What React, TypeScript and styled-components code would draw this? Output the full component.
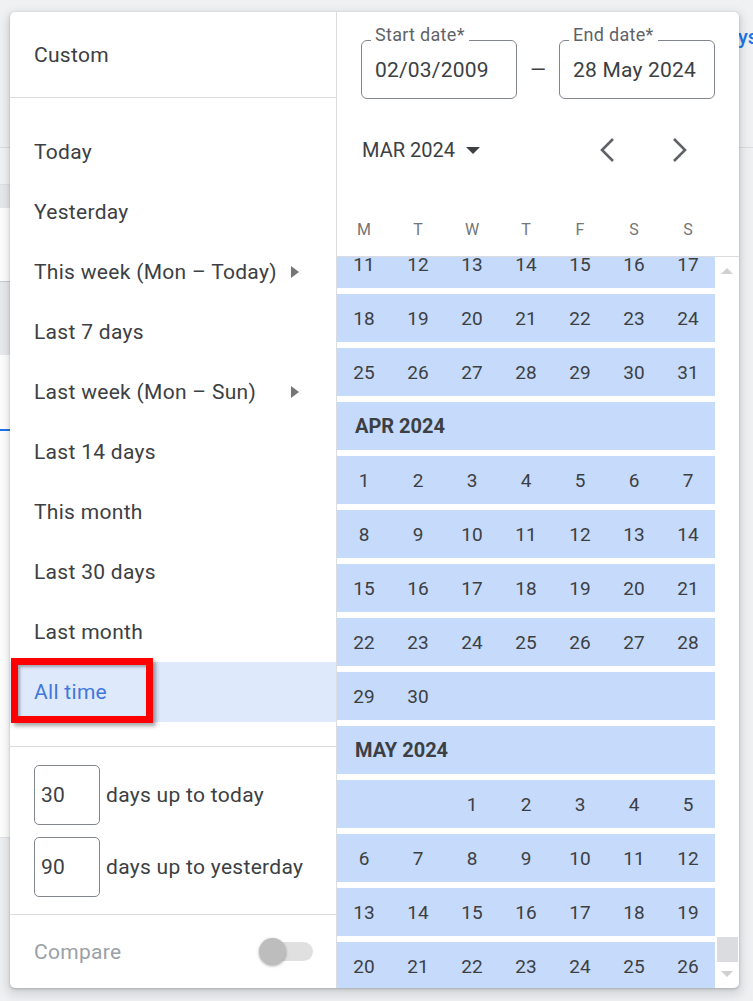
import { useLayoutEffect, useRef } from "react";
import styled, { createGlobalStyle } from "styled-components";

const GlobalStyle = createGlobalStyle`
  html, body {
    margin: 0;
    padding: 0;
  }
  body {
    font-family: Roboto, "Noto Sans", Arial, sans-serif;
    background: #eef0f2;
    overflow: hidden;
  }
  * {
    box-sizing: border-box;
  }
`;

const presets = [
  { label: "Today" },
  { label: "Yesterday" },
  { label: "This week (Mon – Today)", more: true },
  { label: "Last 7 days" },
  { label: "Last week (Mon – Sun)", more: true },
  { label: "Last 14 days" },
  { label: "This month" },
  { label: "Last 30 days" },
  { label: "Last month" },
  { label: "All time", selected: true },
];

const weekdays = ["M", "T", "W", "T", "F", "S", "S"];
const monthNames = ["JAN", "FEB", "MAR", "APR", "MAY", "JUN", "JUL", "AUG", "SEP", "OCT", "NOV", "DEC"];

const buildMonth = (year: number, month: number) => {
  const offset = (new Date(year, month, 1).getDay() + 6) % 7;
  const total = new Date(year, month + 1, 0).getDate();
  const cells: (number | null)[] = Array(offset).fill(null);
  for (let d = 1; d <= total; d++) cells.push(d);
  while (cells.length % 7) cells.push(null);
  const weeks: (number | null)[][] = [];
  for (let i = 0; i < cells.length; i += 7) weeks.push(cells.slice(i, i + 7));
  return { title: `${monthNames[month]} ${year}`, weeks };
};

const months = [buildMonth(2024, 2), buildMonth(2024, 3), buildMonth(2024, 4)];

const App = () => {
  const scrollRef = useRef<HTMLDivElement>(null);

  useLayoutEffect(() => {
    // keep the 11th of March at the top, like the picker does on open
    if (scrollRef.current) scrollRef.current.scrollTop = 179;
  }, []);

  return (
    <>
      <GlobalStyle />
      <Page>
        <TopBar>
          <RangeLink>Last 90 days</RangeLink>
        </TopBar>
        <SideCard>
          <Band $height={37} $tone="#f2f3f5" $edge="#dfe1e4" />
          <Band $height={23} $tone="#e7e9ec" $edge="#e7e9ec" />
          <Band $height={74} $tone="#ffffff" $edge="#c9cbcf" />
          <Band $height={73} $tone="#e8eaed" $edge="#e8eaed" />
          <Band $height={483} $tone="#ffffff" $edge="#dfe1e4">
            <TabLine />
          </Band>
        </SideCard>

        <Popover>
          <PresetColumn>
            <CustomRow>Custom</CustomRow>
            <PresetList>
              {presets.map((p) => (
                <PresetRow key={p.label} $selected={!!p.selected}>
                  {p.label}
                  {p.more && <SubArrow />}
                  {p.selected && <Highlight />}
                </PresetRow>
              ))}
            </PresetList>
            <RollingSection>
              <RollingRow>
                <DaysBox>30</DaysBox>
                days up to today
              </RollingRow>
              <RollingRow>
                <DaysBox>90</DaysBox>
                days up to yesterday
              </RollingRow>
            </RollingSection>
            <CompareRow>
              Compare
              <SwitchTrack>
                <SwitchThumb />
              </SwitchTrack>
            </CompareRow>
          </PresetColumn>

          <CalendarColumn>
            <CalendarHeader>
              <FieldsRow>
                <DateField>
                  <FieldLabel>Start date*</FieldLabel>
                  02/03/2009
                </DateField>
                <Dash>—</Dash>
                <DateField>
                  <FieldLabel>End date*</FieldLabel>
                  28 May 2024
                </DateField>
              </FieldsRow>
              <MonthNav>
                <MonthButton>
                  MAR 2024
                  <Caret />
                </MonthButton>
                <NavButtons>
                  <NavButton aria-label="Previous month">
                    <svg width="16" height="26" viewBox="0 0 16 26">
                      <polyline points="14,2 3,13 14,24" fill="none" stroke="#5f6368" strokeWidth="2.6" />
                    </svg>
                  </NavButton>
                  <NavButton aria-label="Next month">
                    <svg width="16" height="26" viewBox="0 0 16 26">
                      <polyline points="2,2 13,13 2,24" fill="none" stroke="#5f6368" strokeWidth="2.6" />
                    </svg>
                  </NavButton>
                </NavButtons>
              </MonthNav>
              <WeekdayRow>
                {weekdays.map((d, i) => (
                  <Weekday key={i}>{d}</Weekday>
                ))}
              </WeekdayRow>
            </CalendarHeader>

            <CalendarBody>
              <MonthScroller ref={scrollRef}>
                {months.map((m) => (
                  <div key={m.title}>
                    <MonthTitle>{m.title}</MonthTitle>
                    {m.weeks.map((w, i) => (
                      <WeekRow key={i}>
                        {w.map((d, j) => (
                          <DayCell key={j}>{d ?? ""}</DayCell>
                        ))}
                      </WeekRow>
                    ))}
                  </div>
                ))}
              </MonthScroller>
              <ScrollRail>
                <RailArrow $up />
                <RailTrack />
                <RailThumb />
                <RailArrow />
              </ScrollRail>
            </CalendarBody>
          </CalendarColumn>
        </Popover>
      </Page>
    </>
  );
};

export default App;

const Page = styled.div`
  position: relative;
  width: 753px;
  height: 1001px;
  overflow: hidden;
  background: #eef0f2;
`;

const TopBar = styled.div`
  height: 148px;
  display: flex;
  justify-content: flex-end;
  align-items: flex-start;
  padding-top: 25px;
  border-bottom: 1px solid #dadce0;
  background: #eff1f3;
`;

const RangeLink = styled.span`
  flex-shrink: 0;
  margin-right: -5px;
  font-size: 20px;
  font-weight: 500;
  color: #1a73e8;
  white-space: nowrap;
`;

const SideCard = styled.div`
  width: 320px;
  display: flex;
  flex-direction: column;
`;

const Band = styled.div<{ $height: number; $tone: string; $edge: string }>`
  height: ${(p) => p.$height}px;
  background: ${(p) => p.$tone};
  border-bottom: 1px solid ${(p) => p.$edge};
`;

const TabLine = styled.div`
  margin-top: 74px;
  width: 80px;
  height: 2px;
  background: #1a73e8;
`;

const Popover = styled.div`
  position: absolute;
  top: 12px;
  left: 10px;
  width: 729px;
  height: 976px;
  display: flex;
  background: #fff;
  border-radius: 5px;
  overflow: hidden;
  box-shadow: 0 1px 3px rgba(60, 64, 67, 0.3), 0 4px 10px 3px rgba(60, 64, 67, 0.15);
`;

const PresetColumn = styled.div`
  width: 327px;
  display: flex;
  flex-direction: column;
  border-right: 1px solid #dadce0;
  font-size: 21px;
  letter-spacing: 0.3px;
  color: #3c4043;
`;

const CustomRow = styled.div`
  height: 86px;
  display: flex;
  align-items: center;
  padding-left: 24px;
  border-bottom: 1px solid #dadce0;
`;

const PresetList = styled.div`
  padding: 24px 0;
  border-bottom: 1px solid #dadce0;
`;

const PresetRow = styled.div<{ $selected: boolean }>`
  position: relative;
  height: 60px;
  display: flex;
  align-items: center;
  justify-content: space-between;
  padding: 0 37px 0 24px;
  background: ${(p) => (p.$selected ? "#dfe9fc" : "transparent")};
  color: ${(p) => (p.$selected ? "#3f78dd" : "#3c4043")};
`;

const SubArrow = styled.span`
  width: 0;
  height: 0;
  border-left: 8px solid #757575;
  border-top: 6px solid transparent;
  border-bottom: 6px solid transparent;
`;

const Highlight = styled.span`
  position: absolute;
  left: 1px;
  top: -4px;
  width: 142px;
  height: 65px;
  border: 7px solid #ff0000;
  box-shadow: 3px 3px 4px rgba(0, 0, 0, 0.35), inset 2px 2px 3px rgba(0, 0, 0, 0.3);
`;

const RollingSection = styled.div`
  display: flex;
  flex-direction: column;
  gap: 12px;
  padding: 18px 0 17px 24px;
  border-bottom: 1px solid #dadce0;
`;

const RollingRow = styled.div`
  display: flex;
  align-items: center;
  gap: 6px;
`;

const DaysBox = styled.div`
  width: 66px;
  height: 60px;
  display: flex;
  align-items: center;
  padding-left: 6px;
  border: 1px solid #80868b;
  border-radius: 5px;
`;

const CompareRow = styled.div`
  flex: 1;
  display: flex;
  align-items: center;
  justify-content: space-between;
  padding: 0 23px 0 24px;
  color: #9aa0a6;
`;

const SwitchTrack = styled.div`
  position: relative;
  width: 45px;
  height: 19px;
  border-radius: 10px;
  background: #e0e0e0;
`;

const SwitchThumb = styled.div`
  position: absolute;
  left: -9px;
  top: -4px;
  width: 27px;
  height: 27px;
  border-radius: 50%;
  background: #bdbdbd;
  box-shadow: 0 1px 3px rgba(0, 0, 0, 0.35);
`;

const CalendarColumn = styled.div`
  flex: 1;
  display: flex;
  flex-direction: column;
  min-width: 0;
`;

const CalendarHeader = styled.div`
  display: flex;
  flex-direction: column;
  padding-bottom: 10px;
  border-bottom: 1px solid #dadce0;
`;

const FieldsRow = styled.div`
  display: flex;
  align-items: center;
  margin-top: 28px;
  padding-left: 24px;
`;

const DateField = styled.div`
  position: relative;
  width: 156px;
  height: 59px;
  display: flex;
  align-items: center;
  padding-left: 13px;
  border: 1px solid #80868b;
  border-radius: 6px;
  font-size: 21px;
  letter-spacing: 0.2px;
  color: #3c4043;
`;

const FieldLabel = styled.span`
  position: absolute;
  top: -16px;
  left: 9px;
  padding: 0 4px;
  background: #fff;
  font-size: 18px;
  line-height: 20px;
  letter-spacing: 0.3px;
  color: #5f6368;
`;

const Dash = styled.span`
  width: 42px;
  text-align: center;
  font-size: 20px;
  color: #3c4043;
`;

const MonthNav = styled.div`
  height: 40px;
  margin-top: 31px;
  display: flex;
  align-items: center;
  justify-content: space-between;
  padding: 0 35px 0 25px;
`;

const MonthButton = styled.div`
  display: flex;
  align-items: center;
  gap: 11px;
  font-size: 20px;
  color: #3c4043;
`;

const Caret = styled.span`
  width: 0;
  height: 0;
  border-top: 7px solid #3c4043;
  border-left: 7px solid transparent;
  border-right: 7px solid transparent;
`;

const NavButtons = styled.div`
  display: flex;
  gap: 25px;
`;

const NavButton = styled.button`
  width: 48px;
  height: 40px;
  display: flex;
  align-items: center;
  justify-content: center;
  padding: 0;
  border: none;
  background: none;
`;

const WeekdayRow = styled.div`
  height: 34px;
  margin-top: 42px;
  display: grid;
  grid-template-columns: repeat(7, 54px);
`;

const Weekday = styled.span`
  display: flex;
  align-items: center;
  justify-content: center;
  font-size: 16px;
  color: #757575;
`;

const CalendarBody = styled.div`
  flex: 1;
  display: flex;
  min-height: 0;
`;

const MonthScroller = styled.div`
  width: 378px;
  overflow: hidden;
`;

const MonthTitle = styled.div`
  height: 48px;
  margin-bottom: 6px;
  display: flex;
  align-items: center;
  padding-left: 18px;
  background: #c6dafc;
  font-size: 20px;
  font-weight: 700;
  color: #3c4043;
`;

const WeekRow = styled.div`
  height: 48px;
  margin-bottom: 6px;
  display: grid;
  grid-template-columns: repeat(7, 54px);
  background: #c6dafc;
`;

const DayCell = styled.span`
  display: flex;
  align-items: center;
  justify-content: center;
  font-size: 19px;
  color: #3c4043;
`;

const ScrollRail = styled.div`
  width: 24px;
  display: flex;
  flex-direction: column;
  align-items: center;
  padding: 11px 0 11px;
`;

const RailArrow = styled.span<{ $up?: boolean }>`
  width: 0;
  height: 0;
  border-left: 6px solid transparent;
  border-right: 6px solid transparent;
  ${(p) => (p.$up ? "border-bottom: 6px solid #cfd0d2;" : "border-top: 6px solid #cfd0d2;")}
`;

const RailTrack = styled.div`
  flex: 1;
`;

const RailThumb = styled.div`
  width: 21px;
  height: 25px;
  margin-bottom: 9px;
  background: #dadce0;
`;
